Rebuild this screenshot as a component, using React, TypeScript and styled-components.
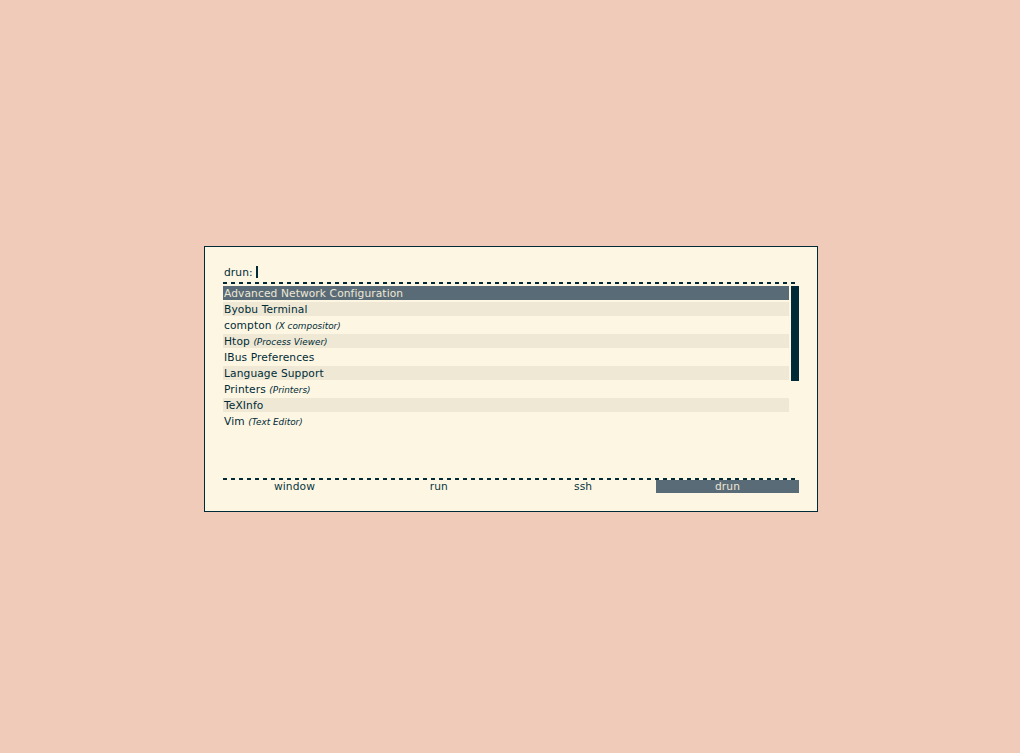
import React from "react";
import styled, { createGlobalStyle } from "styled-components";

const GlobalStyle = createGlobalStyle`
  html, body {
    margin: 0;
    padding: 0;
    background: #f0cbb9;
  }
  body {
    font-family: "DejaVu Sans", "Liberation Sans", sans-serif;
    font-size: 10.67px;
    letter-spacing: 0.1px;
    color: #002b36;
  }
`;

const Page = styled.div`
  box-sizing: border-box;
  min-height: 100vh;
  padding: 246px 0 0 204px;
`;

const Window = styled.div`
  box-sizing: border-box;
  width: 614px;
  height: 266px;
  border: 1px solid #002b36;
  background: #fdf6e3;
  padding: 18px;
  display: flex;
  flex-direction: column;
`;

const InputBar = styled.div`
  height: 17px;
  display: flex;
  align-items: flex-start;
  padding-left: 1px;
`;

const Prompt = styled.span`
  line-height: 16px;
  color: #002b36;
`;

const Cursor = styled.span`
  display: block;
  width: 2px;
  height: 12px;
  margin-top: 1px;
  margin-left: 3px;
  background: #002b36;
`;

const Dash = styled.div<{ $gap?: number }>`
  height: 2px;
  flex: none;
  margin-top: ${(p) => p.$gap ?? 0}px;
  background: repeating-linear-gradient(
    to right,
    #002b36 0 4px,
    transparent 4px 8px
  );
`;

const ListArea = styled.div`
  margin-top: 2px;
  height: 190px;
  display: flex;
  gap: 2px;
`;

const List = styled.div`
  flex: 1;
  display: flex;
  flex-direction: column;
  gap: 2px;
`;

const Row = styled.div<{ $variant: "selected" | "alt" | "normal" }>`
  height: 14px;
  line-height: 16px;
  padding: 0 1px;
  white-space: nowrap;
  overflow: visible;
  background: ${(p) =>
    p.$variant === "selected"
      ? "#5a6b78"
      : p.$variant === "alt"
      ? "#eee8d5"
      : "transparent"};
  color: ${(p) => (p.$variant === "selected" ? "#eee8d5" : "#002b36")};
`;

const Comment = styled.i`
  font-size: 8.9px;
  font-style: oblique;
  letter-spacing: 0;
`;

const Scrollbar = styled.div`
  width: 8px;
  display: flex;
  flex-direction: column;
`;

const Handle = styled.div`
  height: 95px;
  background: #002b36;
`;

const ModeBar = styled.div`
  height: 13px;
  display: flex;
  justify-content: space-between;
`;

const ModeButton = styled.div<{ $active?: boolean }>`
  width: 143px;
  text-align: center;
  line-height: 13px;
  background: ${(p) => (p.$active ? "#5a6b78" : "transparent")};
  color: ${(p) => (p.$active ? "#eee8d5" : "#073642")};
`;

const items: { name: string; comment?: string }[] = [
  { name: "Advanced Network Configuration" },
  { name: "Byobu Terminal" },
  { name: "compton", comment: "X compositor" },
  { name: "Htop", comment: "Process Viewer" },
  { name: "IBus Preferences" },
  { name: "Language Support" },
  { name: "Printers", comment: "Printers" },
  { name: "TeXInfo" },
  { name: "Vim", comment: "Text Editor" },
];

const modes = ["window", "run", "ssh", "drun"];

export default function App() {
  return (
    <>
      <GlobalStyle />
      <Page>
        <Window>
          <InputBar>
            <Prompt>drun:</Prompt>
            <Cursor />
          </InputBar>
          <Dash />
          <ListArea>
            <List>
              {items.map((it, i) => (
                <Row
                  key={it.name}
                  $variant={i === 0 ? "selected" : i % 2 === 1 ? "alt" : "normal"}
                >
                  {it.name}
                  {it.comment && (
                    <>
                      {" "}
                      <Comment>({it.comment})</Comment>
                    </>
                  )}
                </Row>
              ))}
            </List>
            <Scrollbar>
              <Handle />
            </Scrollbar>
          </ListArea>
          <Dash $gap={2} />
          <ModeBar>
            {modes.map((m) => (
              <ModeButton key={m} $active={m === "drun"}>
                {m}
              </ModeButton>
            ))}
          </ModeBar>
        </Window>
      </Page>
    </>
  );
}
